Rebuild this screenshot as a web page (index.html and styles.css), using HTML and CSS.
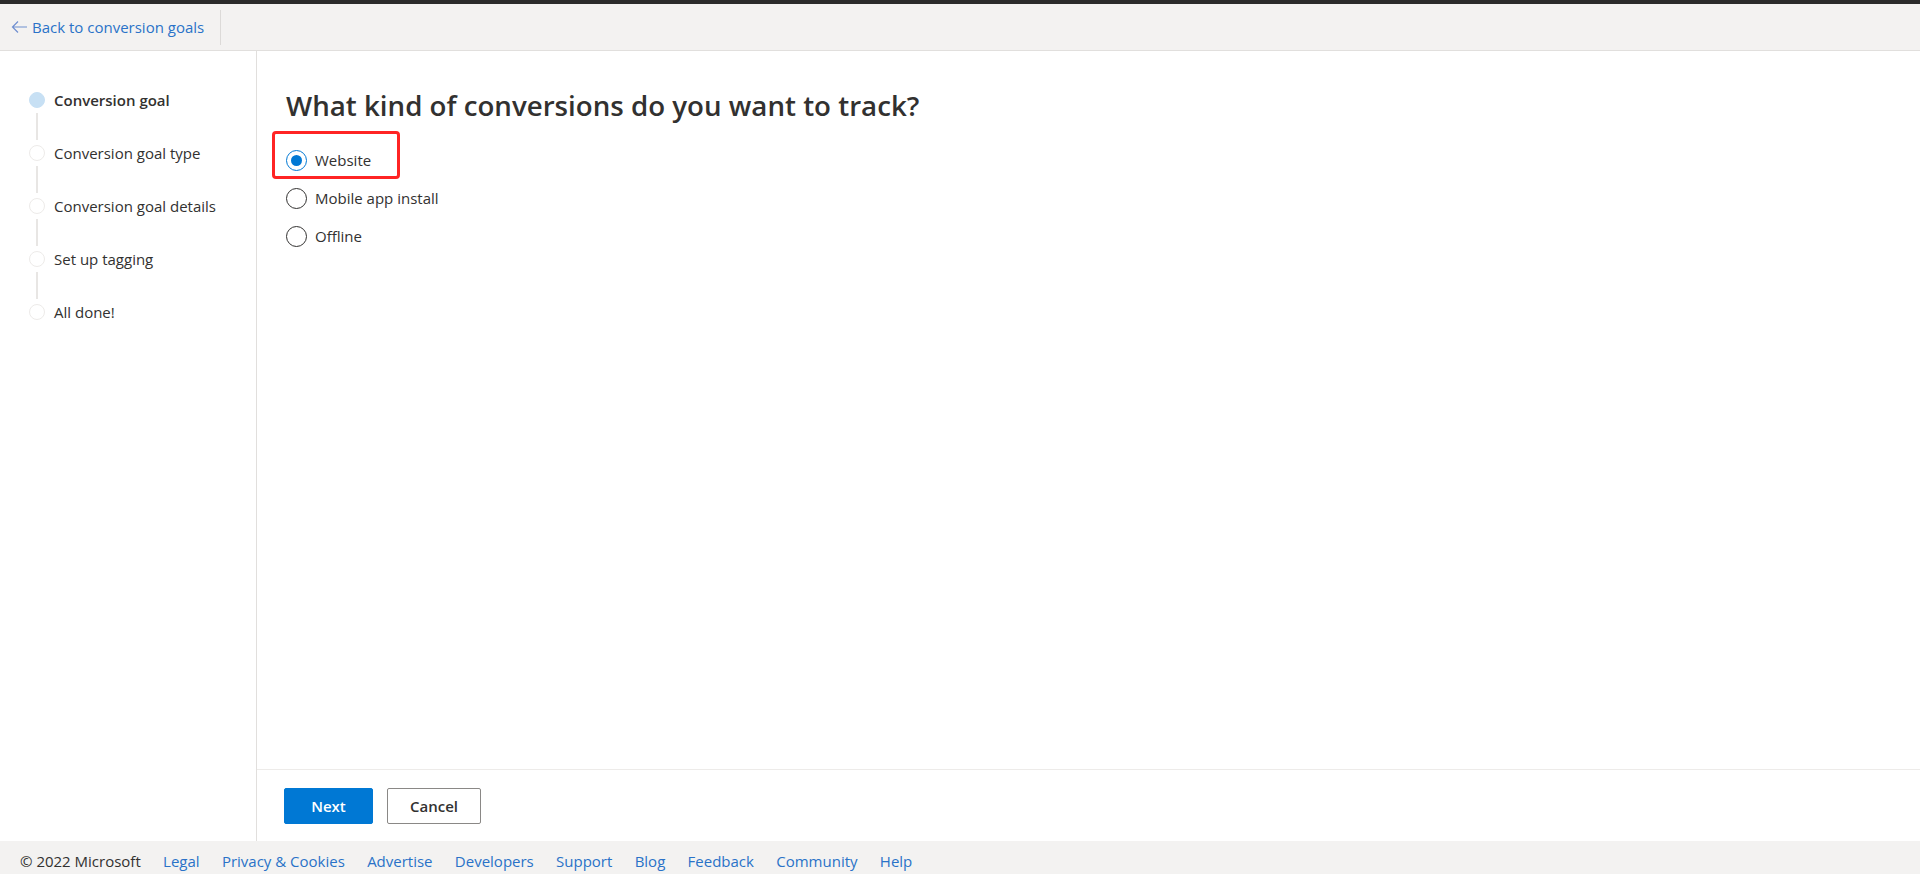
FILE: index.html
```html
<!DOCTYPE html>
<html lang="en">
<head>
<meta charset="utf-8">
<title>Conversion goal</title>
<link rel="stylesheet" href="styles.css">
</head>
<body>
<div class="page">
  <div class="topbar"></div>
  <header class="header">
    <a class="back-link" href="#">
      <svg class="back-icon" width="17" height="14" viewBox="0 0 17 14" aria-hidden="true">
        <path d="M16 7H1.5M7 1.5L1.5 7L7 12.5" fill="none" stroke="#6f8fd0" stroke-width="1.2"/>
      </svg>
      <span>Back to conversion goals</span>
    </a>
  </header>
  <div class="middle">
    <nav class="sidebar">
      <div class="step active"><span class="dot"></span><span class="step-label">Conversion goal</span></div>
      <div class="connector"></div>
      <div class="step"><span class="dot"></span><span class="step-label">Conversion goal type</span></div>
      <div class="connector"></div>
      <div class="step"><span class="dot"></span><span class="step-label">Conversion goal details</span></div>
      <div class="connector"></div>
      <div class="step"><span class="dot"></span><span class="step-label">Set up tagging</span></div>
      <div class="connector"></div>
      <div class="step"><span class="dot"></span><span class="step-label">All done!</span></div>
    </nav>
    <main class="main">
      <div class="content">
        <h1 class="title">What kind of conversions do you want to track?</h1>
        <div class="radio-group">
          <div class="highlight"></div>
          <label class="radio-row"><span class="radio checked"></span><span class="radio-label">Website</span></label>
          <label class="radio-row"><span class="radio"></span><span class="radio-label">Mobile app install</span></label>
          <label class="radio-row"><span class="radio"></span><span class="radio-label">Offline</span></label>
        </div>
      </div>
      <div class="actions">
        <button class="btn btn-primary">Next</button>
        <button class="btn btn-secondary">Cancel</button>
      </div>
    </main>
  </div>
  <footer class="footer">
    <span class="copyright">© 2022 Microsoft</span>
    <a href="#">Legal</a>
    <a href="#">Privacy &amp; Cookies</a>
    <a href="#">Advertise</a>
    <a href="#">Developers</a>
    <a href="#">Support</a>
    <a href="#">Blog</a>
    <a href="#">Feedback</a>
    <a href="#">Community</a>
    <a href="#">Help</a>
  </footer>
</div>
</body>
</html>
```

FILE: styles.css
```css
* { box-sizing: border-box; }
html, body { margin: 0; padding: 0; }
body {
  font-family: "Open Sans", "Noto Sans", "Liberation Sans", sans-serif;
  font-size: 15px;
  color: #323130;
  background: #ffffff;
  overflow: hidden;
}
.page {
  height: 874px;
  display: flex;
  flex-direction: column;
}
.topbar {
  height: 4px;
  background: #2b2b2b;
  flex: none;
}
.header {
  height: 47px;
  flex: none;
  background: #f3f2f1;
  border-bottom: 1px solid #e1dfdd;
  display: flex;
  align-items: center;
  padding-left: 11px;
}
.back-link {
  display: flex;
  align-items: center;
  height: 35px;
  padding-right: 16px;
  border-right: 1px solid #dcdad8;
  color: #2a72c8;
  text-decoration: none;
  font-size: 15px;
}
.back-icon { margin-right: 4px; }
.middle {
  flex: 1;
  display: flex;
  min-height: 0;
}
.sidebar {
  width: 257px;
  flex: none;
  border-right: 1px solid #e1dfdd;
  padding: 41px 0 0 29px;
}
.step {
  display: flex;
  align-items: center;
  height: 16px;
}
.dot {
  width: 16px;
  height: 16px;
  border-radius: 50%;
  border: 1.5px solid #edebe9;
  background: #fff;
  flex: none;
}
.step.active .dot {
  background: #c7e0f4;
  border-color: #c7e0f4;
}
.step-label {
  margin-left: 9px;
  line-height: 20px;
  white-space: nowrap;
}
.step.active .step-label { font-weight: 600; }
.connector {
  width: 2px;
  height: 27px;
  margin: 5px 0 5px 7px;
  background: #e8e6e4;
}
.main {
  flex: 1;
  display: flex;
  flex-direction: column;
}
.content {
  flex: 1;
  padding: 35px 0 0 29px;
}
.title {
  margin: 0;
  font-size: 27.7px;
  font-weight: 600;
  line-height: 38px;
  color: #323130;
}
.radio-group {
  position: relative;
  margin-top: 17px;
  display: flex;
  flex-direction: column;
}
.radio-row {
  display: flex;
  align-items: center;
  height: 38px;
}
.radio {
  width: 21px;
  height: 21px;
  border-radius: 50%;
  border: 1px solid #323130;
  background: #fff;
  flex: none;
  position: relative;
}
.radio.checked { border-color: #0078d4; }
.radio.checked::after {
  content: "";
  position: absolute;
  left: 4px;
  top: 4px;
  width: 11px;
  height: 11px;
  border-radius: 50%;
  background: #0078d4;
}
.radio-label {
  margin-left: 8px;
  line-height: 20px;
}
.highlight {
  position: absolute;
  left: -14px;
  top: -10px;
  width: 128px;
  height: 48px;
  border: 3px solid #ff2424;
  border-radius: 4px;
  pointer-events: none;
}
.actions {
  flex: none;
  border-top: 1px solid #edebe9;
  padding: 18px 0 17px 27px;
  display: flex;
  gap: 14px;
}
.btn {
  height: 36px;
  min-width: 89px;
  padding: 0 22px;
  border-radius: 2px;
  font-family: inherit;
  font-size: 15px;
  font-weight: 600;
  cursor: pointer;
}
.btn-primary {
  background: #0078d4;
  border: 1px solid #0078d4;
  color: #fff;
}
.btn-secondary {
  background: #fff;
  border: 1px solid #8a8886;
  color: #323130;
}
.footer {
  height: 33px;
  flex: none;
  background: #f3f2f1;
  display: flex;
  align-items: center;
  gap: 22.3px;
  padding: 6px 0 0 20px;
  font-size: 15px;
}
.footer a {
  color: #2a72c8;
  text-decoration: none;
}
.copyright { color: #323130; }
```
